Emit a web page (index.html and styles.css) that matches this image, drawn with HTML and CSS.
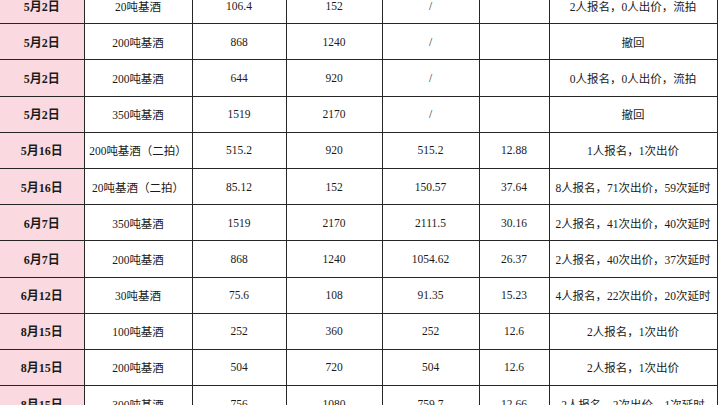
FILE: index.html
```html
<!DOCTYPE html>
<html lang="zh">
<head>
<meta charset="utf-8">
<link rel="stylesheet" href="styles.css">
</head>
<body>
<table class="sheet">
<colgroup>
<col class="c-date"><col class="c-name"><col class="c-start"><col class="c-eval"><col class="c-deal"><col class="c-unit"><col class="c-note">
</colgroup>
<tbody>
<tr><td class="date">5月2日</td><td>20吨基酒</td><td>106.4</td><td>152</td><td>/</td><td></td><td>2人报名，0人出价，流拍</td></tr>
<tr><td class="date">5月2日</td><td>200吨基酒</td><td>868</td><td>1240</td><td>/</td><td></td><td>撤回</td></tr>
<tr><td class="date">5月2日</td><td>200吨基酒</td><td>644</td><td>920</td><td>/</td><td></td><td>0人报名，0人出价，流拍</td></tr>
<tr><td class="date">5月2日</td><td>350吨基酒</td><td>1519</td><td>2170</td><td>/</td><td></td><td>撤回</td></tr>
<tr><td class="date">5月16日</td><td>200吨基酒（二拍）</td><td>515.2</td><td>920</td><td>515.2</td><td>12.88</td><td>1人报名，1次出价</td></tr>
<tr><td class="date">5月16日</td><td>20吨基酒（二拍）</td><td>85.12</td><td>152</td><td>150.57</td><td>37.64</td><td>8人报名，71次出价，59次延时</td></tr>
<tr><td class="date">6月7日</td><td>350吨基酒</td><td>1519</td><td>2170</td><td>2111.5</td><td>30.16</td><td>2人报名，41次出价，40次延时</td></tr>
<tr><td class="date">6月7日</td><td>200吨基酒</td><td>868</td><td>1240</td><td>1054.62</td><td>26.37</td><td>2人报名，40次出价，37次延时</td></tr>
<tr><td class="date">6月12日</td><td>30吨基酒</td><td>75.6</td><td>108</td><td>91.35</td><td>15.23</td><td>4人报名，22次出价，20次延时</td></tr>
<tr><td class="date">8月15日</td><td>100吨基酒</td><td>252</td><td>360</td><td>252</td><td>12.6</td><td>2人报名，1次出价</td></tr>
<tr><td class="date">8月15日</td><td>200吨基酒</td><td>504</td><td>720</td><td>504</td><td>12.6</td><td>2人报名，1次出价</td></tr>
<tr><td class="date">8月15日</td><td>300吨基酒</td><td>756</td><td>1080</td><td>759.7</td><td>12.66</td><td>2人报名，2次出价，1次延时</td></tr>
</tbody>
</table>
</body>
</html>
```
FILE: styles.css
```css
html, body {
  margin: 0;
  padding: 0;
  background: #ffffff;
  overflow: hidden;
}
.sheet {
  border-collapse: collapse;
  table-layout: fixed;
  width: 717px;
  margin-top: -13px;
  font-family: "Liberation Serif", "Noto Sans CJK SC", serif;
  font-size: 11.5px;
  color: #1a1a1a;
}
.c-date { width: 84px; }
.c-name { width: 108px; }
.c-start { width: 94px; }
.c-eval { width: 96px; }
.c-deal { width: 97px; }
.c-unit { width: 70px; }
.c-note { width: 168px; }
.sheet td {
  border: 1px solid #262626;
  height: 35.2px;
  padding: 0;
  text-align: center;
  vertical-align: middle;
  white-space: nowrap;
}
.sheet td.date {
  background: #fadae0;
  font-weight: bold;
  font-size: 12px;
  border-left: none;
}
```
